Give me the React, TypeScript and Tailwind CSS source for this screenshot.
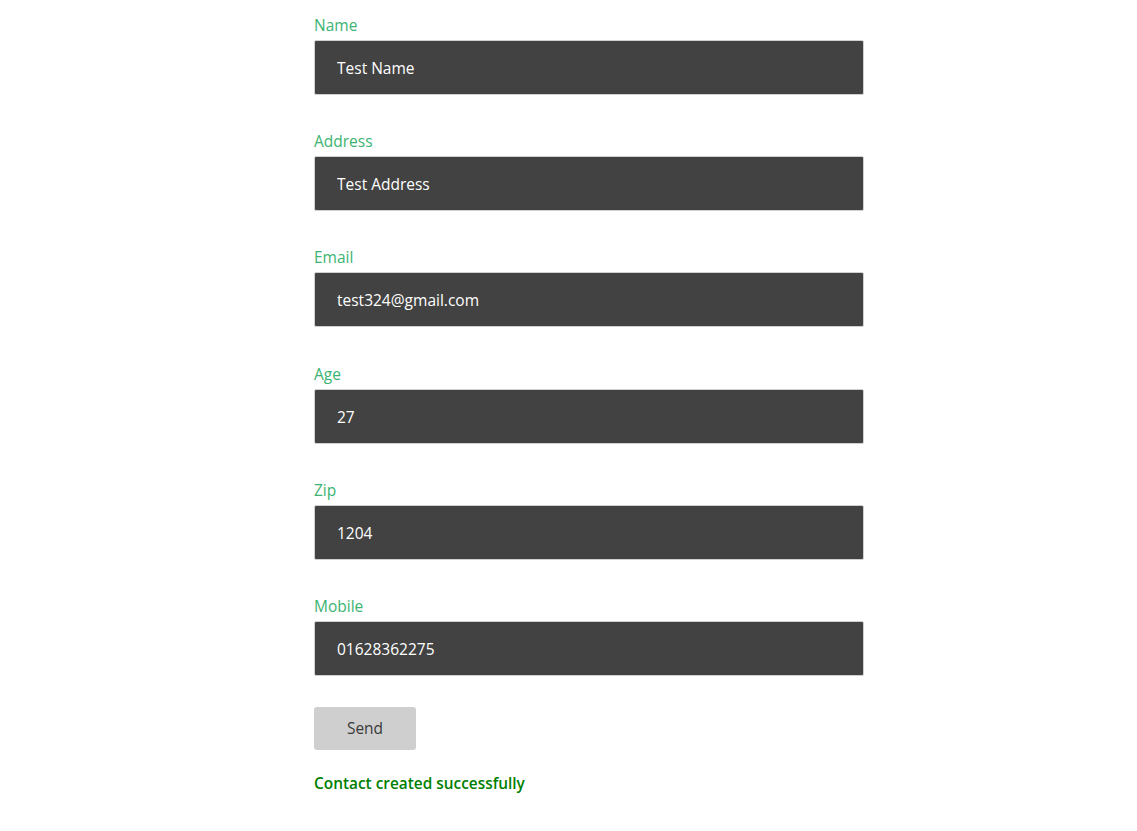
import React from "react";

const fields = [
  { label: "Name", value: "Test Name" },
  { label: "Address", value: "Test Address" },
  { label: "Email", value: "test324@gmail.com" },
  { label: "Age", value: "27" },
  { label: "Zip", value: "1204" },
  { label: "Mobile", value: "01628362275" },
];

export default function App() {
  return (
    <div
      className="min-h-[831px] w-full bg-white"
      style={{ fontFamily: '"Open Sans", "Noto Sans", sans-serif' }}
    >
      <div className="ml-[314px] w-[550px] pt-[13px]">
        {fields.map((f) => (
          <div key={f.label} className="mb-[34.2px] flex flex-col">
            <label className="mb-[3px] text-[15.5px] leading-6 text-[#3cb371]">{f.label}</label>
            <input
              readOnly
              value={f.value}
              className="h-[55px] w-full rounded-[2px] border border-[#d0d0d0] bg-[#424242] px-[22px] pt-px text-[15.5px] text-white outline-none"
            />
          </div>
        ))}
        <button className="mt-[-3.2px] h-[43px] w-[102px] rounded-[3px] bg-[#cfcfcf] text-[15.5px] text-[#3a3a3a]">
          Send
        </button>
        <p className="mt-[22px] text-[15.4px] font-semibold leading-6 text-[#008000]">
          Contact created successfully
        </p>
      </div>
    </div>
  );
}
